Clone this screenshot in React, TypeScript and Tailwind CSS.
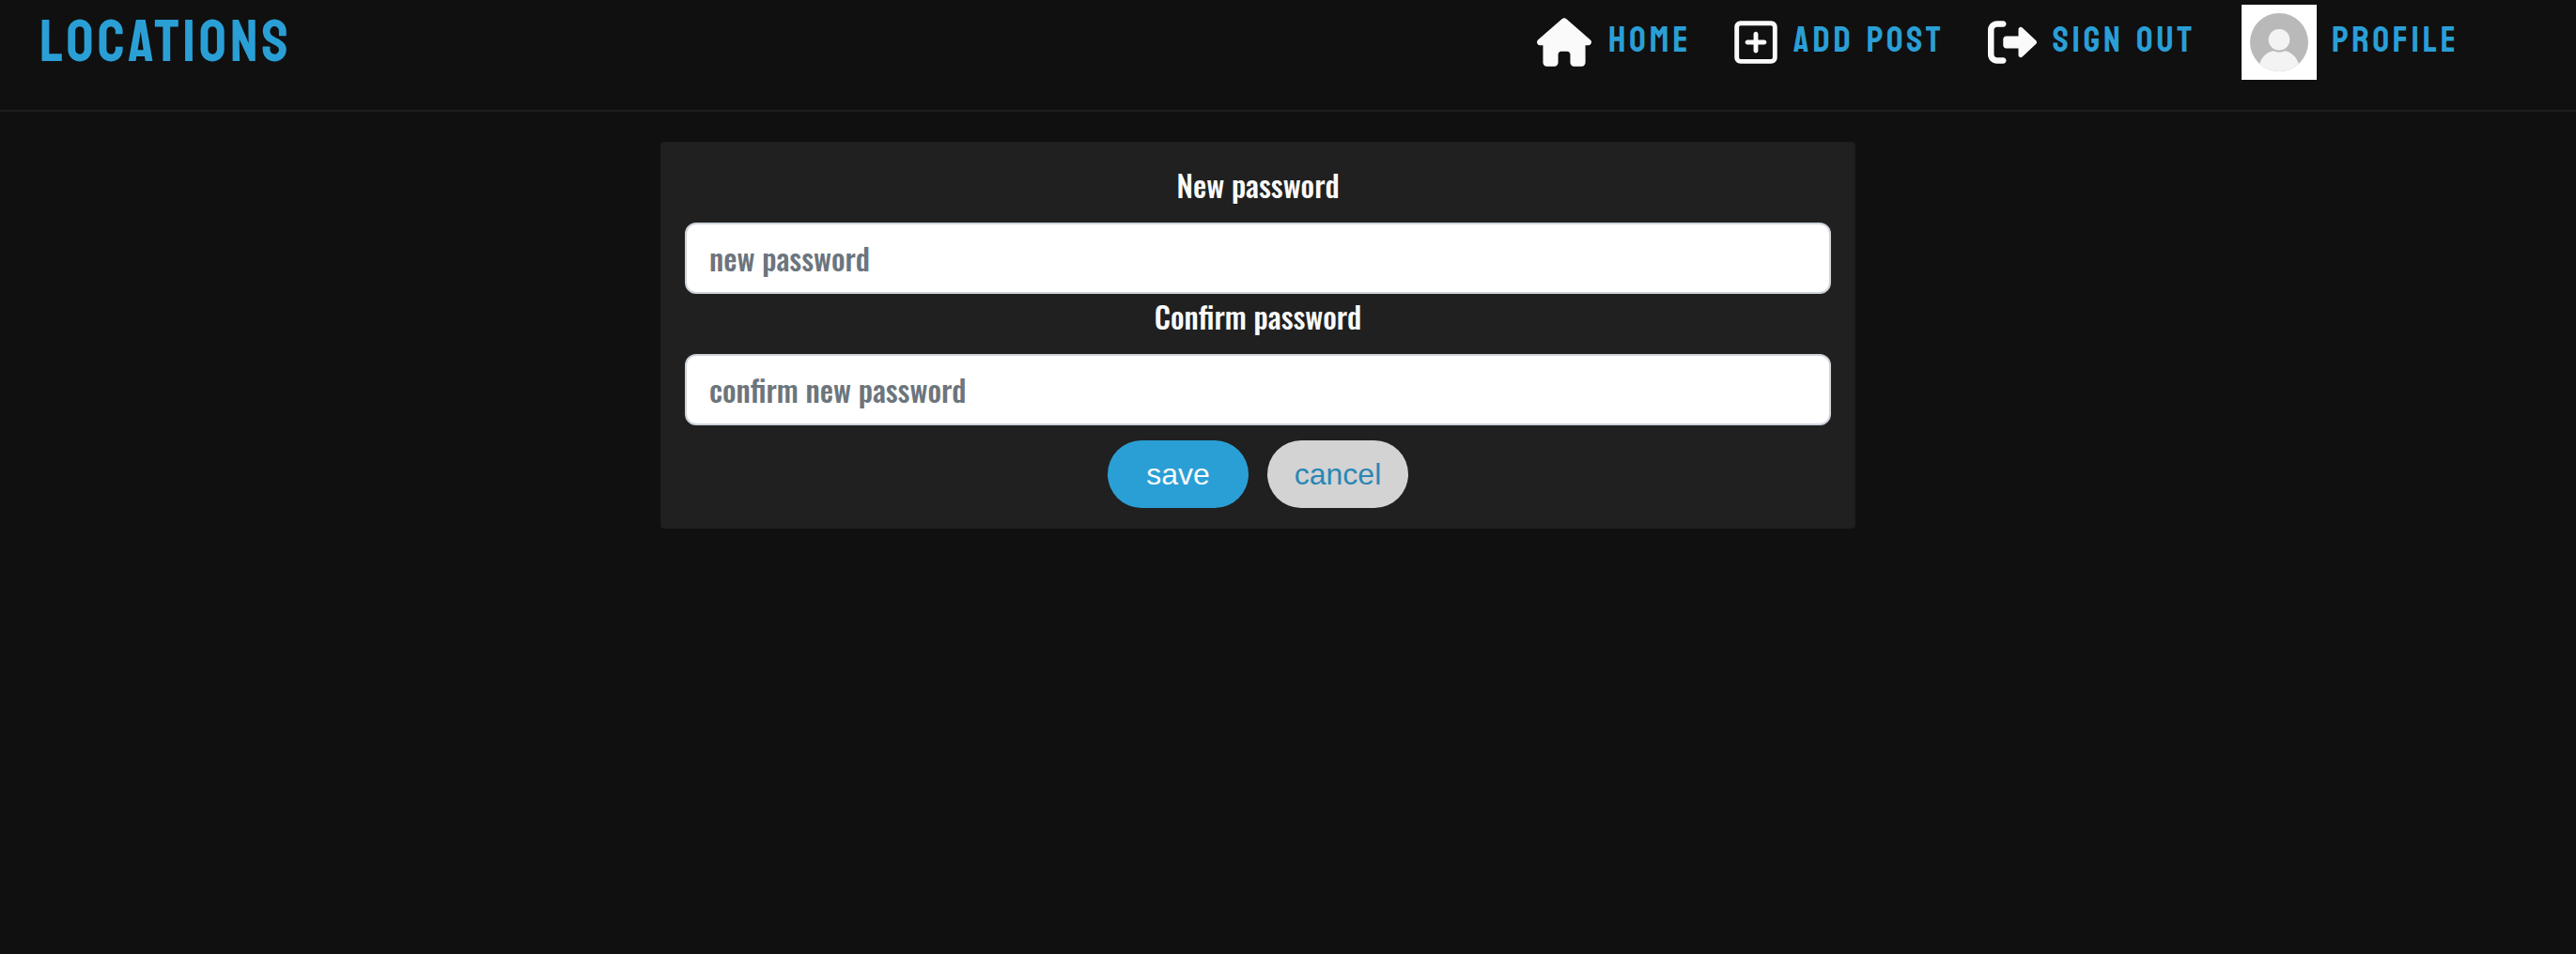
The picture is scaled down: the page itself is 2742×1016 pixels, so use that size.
import { FaHouse, FaRegSquarePlus } from "react-icons/fa6";
import type { ReactNode } from "react";

function Avatar() {
  return (
    <svg viewBox="0 0 80 80" className="size-20 shrink-0 bg-white">
      <defs>
        <clipPath id="avatar-disc">
          <circle cx="40" cy="40" r="31" />
        </clipPath>
      </defs>
      <circle cx="40" cy="40" r="31" fill="#b9b9b9" />
      <g clipPath="url(#avatar-disc)" fill="#f3f3f3">
        <circle cx="40" cy="37.2" r="11.3" />
        <path d="M16 74 L19.5 62 C22 55 28 50 34 49.3 Q40 52.2 46 49.3 C52 50 58 55 60.5 62 L64 74 Z" />
      </g>
    </svg>
  );
}

function SignOutIcon({ className }: { className: string }) {
  return (
    <svg viewBox="0 0 512 512" fill="currentColor" className={className}>
      <path d="M96 480h64C177.7 480 192 465.7 192 448S177.7 416 160 416H96c-17.67 0-32-14.33-32-32V128c0-17.67 14.33-32 32-32h64C177.7 96 192 81.67 192 64S177.7 32 160 32H96C42.98 32 0 74.98 0 128v256C0 437 42.98 480 96 480zM504.8 238.5l-144.1-136c-6.975-6.578-17.2-8.375-26-4.594c-8.803 3.797-14.51 12.47-14.51 22.05l-.0918 72l-128-.001c-17.69 0-32.02 14.33-32.02 32v64c0 17.67 14.34 32 32.02 32l128 .001l.0918 71.1c0 9.578 5.707 18.25 14.51 22.05c8.803 3.781 19.03 1.984 26-4.594l144.1-136C514.4 264.4 514.4 247.6 504.8 238.5z" />
    </svg>
  );
}

function NavLink({ children, icon, className }: { children: string; icon: ReactNode; className: string }) {
  return (
    <a href="#" className={`flex h-20 items-center ${className}`}>
      {icon}
      <span className="-mt-[5px] whitespace-nowrap leading-[48px]">{children}</span>
    </a>
  );
}

function Header() {
  return (
    <header className="flex h-[119px] items-start border-b-2 border-[#1e1e1e] pl-[42px] font-['Staatliches','Bebas_Neue','Roboto',sans-serif] font-normal text-[#2a9fd6]">
      <a href="#" className="mt-[9px] text-[64px] leading-[70px] tracking-[4px]">
        LOCATIONS
      </a>
      <nav className="ml-auto flex pt-[5px] text-[38.4px] tracking-[4px] [word-spacing:3.4px]">
        <NavLink className="w-[210px] gap-[18px]" icon={<FaHouse className="h-[52px] w-[58px] shrink-0 text-[#fafafa]" />}>
          HOME
        </NavLink>
        <NavLink className="w-[270px] gap-[17px]" icon={<FaRegSquarePlus className="h-[52px] w-[46px] shrink-0 text-[#fafafa]" />}>
          ADD POST
        </NavLink>
        <NavLink className="w-[270px] gap-[17px]" icon={<SignOutIcon className="size-[52px] shrink-0 text-[#fafafa]" />}>
          SIGN OUT
        </NavLink>
        <NavLink className="w-[356px] gap-4 tracking-[3.8px]" icon={<Avatar />}>
          PROFILE
        </NavLink>
      </nav>
    </header>
  );
}

function Field({ label, placeholder }: { label: string; placeholder: string }) {
  return (
    <label className="flex flex-col items-center gap-4">
      <span className="leading-[48px] text-[#fafafa]">{label}</span>
      <input
        type="password"
        placeholder={placeholder}
        className="h-[76px] w-full rounded-xl border-2 border-[#ced4da] bg-white px-6 pb-0.5 placeholder:text-[#6c757d]"
      />
    </label>
  );
}

export default function App() {
  return (
    <div className="h-[1016px] overflow-hidden bg-[#101010] font-['Oswald','Roboto',sans-serif] text-[32px] font-medium">
      <Header />
      <main className="ml-[703px] mt-8 flex h-[412px] w-[1272px] flex-col rounded border-2 border-[#1e1e1e] bg-[#202020] px-6 pt-5">
        <Field label="New password" placeholder="new password" />
        <Field label="Confirm password" placeholder="confirm new password" />
        <div className="mt-4 flex justify-center gap-5 font-['Liberation_Sans',Arial,sans-serif] font-normal">
          <button className="h-[72px] w-[150px] rounded-full bg-[#2a9fd6] text-[#fafafa]">save</button>
          <button className="h-[72px] w-[150px] rounded-full bg-[#d3d3d3] text-[#2a87b4]">cancel</button>
        </div>
      </main>
    </div>
  );
}
